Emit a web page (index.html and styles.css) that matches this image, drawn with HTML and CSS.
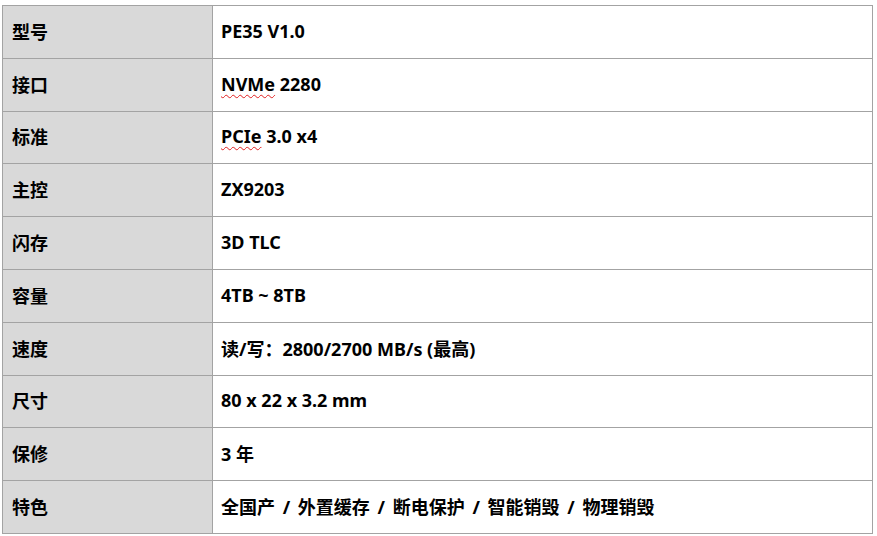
FILE: index.html
```html
<!DOCTYPE html>
<html lang="zh-CN">
<head>
<meta charset="utf-8">
<title>规格</title>
<link rel="stylesheet" href="styles.css">
</head>
<body>
<table class="spec">
  <tbody>
    <tr><th>型号</th><td>PE35 V1.0</td></tr>
    <tr><th>接口</th><td><span class="spell">NVMe</span> 2280</td></tr>
    <tr><th>标准</th><td><span class="spell">PCIe</span> 3.0 x4</td></tr>
    <tr><th>主控</th><td>ZX9203</td></tr>
    <tr><th>闪存</th><td>3D TLC</td></tr>
    <tr><th>容量</th><td>4TB ~ 8TB</td></tr>
    <tr><th>速度</th><td>读/写：2800/2700 MB/s (最高)</td></tr>
    <tr><th>尺寸</th><td>80 x 22 x 3.2 mm</td></tr>
    <tr><th>保修</th><td>3 年</td></tr>
    <tr><th>特色</th><td>全国产 <span class="sep">/</span> 外置缓存 <span class="sep">/</span> 断电保护 <span class="sep">/</span> 智能销毁 <span class="sep">/</span> 物理销毁</td></tr>
  </tbody>
</table>
</body>
</html>
```
FILE: styles.css
```css
html, body {
  margin: 0;
  padding: 0;
  background: #ffffff;
}
body {
  padding: 5px 0 0 2px;
  font-family: "Noto Sans", "Noto Sans CJK SC", sans-serif;
  font-weight: 700;
  font-size: 18px;
  color: #000;
}
.spec {
  border-collapse: collapse;
  width: 871px;
  height: 529px;
  table-layout: fixed;
}
.spec th, .spec td {
  border: 1px solid #a3a3a3;
  text-align: left;
  vertical-align: middle;
  font-weight: 700;
  white-space: nowrap;
  padding: 0 0 2px 0;
}
.spec th {
  width: 200px;
  background: #d9d9d9;
  padding-left: 9px;
}
.spec td {
  background: #ffffff;
  padding-left: 8px;
}
.sep {
  margin: 0 3px;
}
.spell {
  text-decoration: underline wavy #e02020;
  text-decoration-thickness: 1px;
  text-underline-offset: 3px;
}
```
